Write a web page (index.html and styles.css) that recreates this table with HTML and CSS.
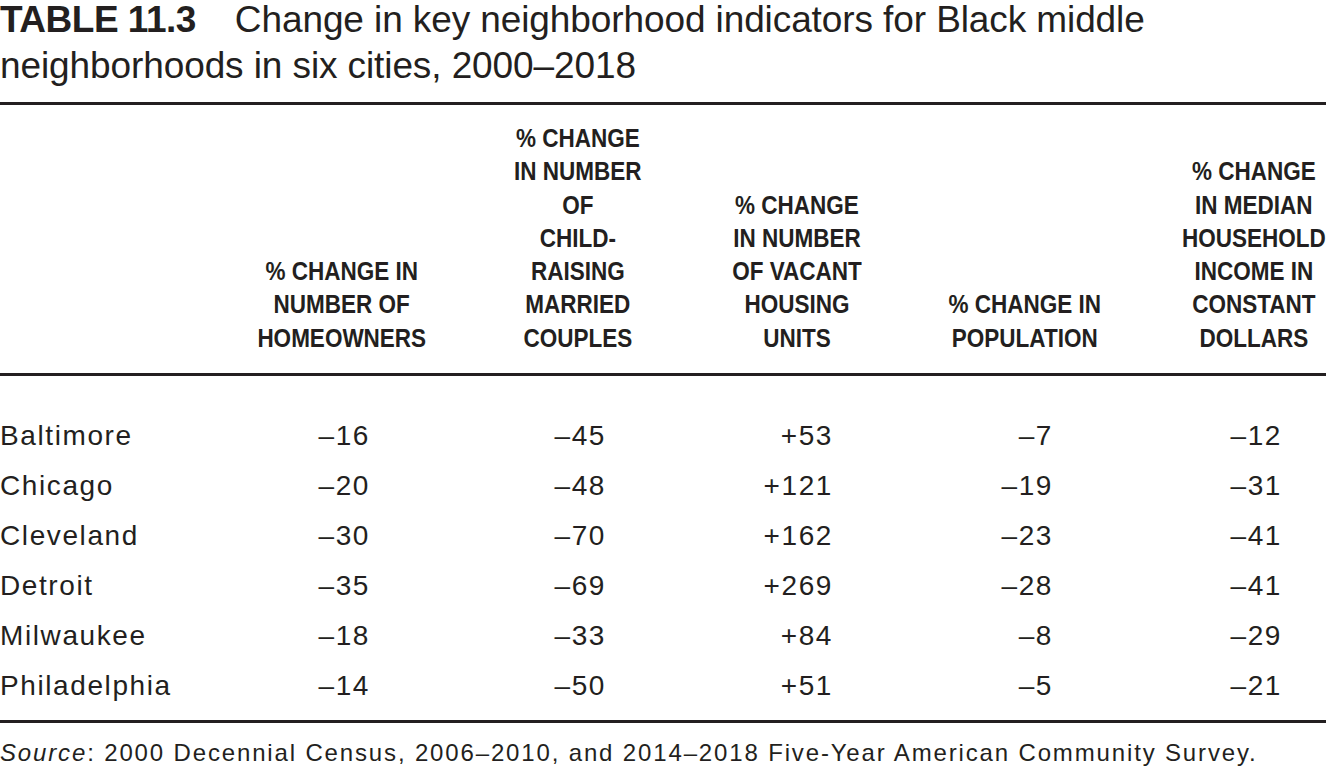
FILE: index.html
```html
<!DOCTYPE html>
<html lang="en">
<head>
<meta charset="utf-8">
<title>Table 11.3</title>
<link rel="stylesheet" href="styles.css">
</head>
<body>
<div class="page">
  <h1 class="title"><span class="label">TABLE 11.3</span>Change in key neighborhood indicators for Black middle neighborhoods in six cities, 2000–2018</h1>
  <table class="data">
    <colgroup>
      <col class="col-city">
      <col class="col-a">
      <col class="col-b">
      <col class="col-c">
      <col class="col-d">
      <col class="col-e">
    </colgroup>
    <thead>
      <tr>
        <th></th>
        <th><span class="h">% CHANGE IN<br>NUMBER OF<br>HOMEOWNERS</span></th>
        <th><span class="h">% CHANGE<br>IN NUMBER<br>OF<br>CHILD-<br>RAISING<br>MARRIED<br>COUPLES</span></th>
        <th><span class="h">% CHANGE<br>IN NUMBER<br>OF VACANT<br>HOUSING<br>UNITS</span></th>
        <th><span class="h">% CHANGE IN<br>POPULATION</span></th>
        <th><span class="h">% CHANGE<br>IN MEDIAN<br>HOUSEHOLD<br>INCOME IN<br>CONSTANT<br>DOLLARS</span></th>
      </tr>
    </thead>
    <tbody>
      <tr><td class="city">Baltimore</td><td class="num"><span>–16</span></td><td class="num"><span>–45</span></td><td class="num wide"><span>+53</span></td><td class="num"><span>–7</span></td><td class="num"><span>–12</span></td></tr>
      <tr><td class="city">Chicago</td><td class="num"><span>–20</span></td><td class="num"><span>–48</span></td><td class="num wide"><span>+121</span></td><td class="num"><span>–19</span></td><td class="num"><span>–31</span></td></tr>
      <tr><td class="city">Cleveland</td><td class="num"><span>–30</span></td><td class="num"><span>–70</span></td><td class="num wide"><span>+162</span></td><td class="num"><span>–23</span></td><td class="num"><span>–41</span></td></tr>
      <tr><td class="city">Detroit</td><td class="num"><span>–35</span></td><td class="num"><span>–69</span></td><td class="num wide"><span>+269</span></td><td class="num"><span>–28</span></td><td class="num"><span>–41</span></td></tr>
      <tr><td class="city">Milwaukee</td><td class="num"><span>–18</span></td><td class="num"><span>–33</span></td><td class="num wide"><span>+84</span></td><td class="num"><span>–8</span></td><td class="num"><span>–29</span></td></tr>
      <tr><td class="city">Philadelphia</td><td class="num"><span>–14</span></td><td class="num"><span>–50</span></td><td class="num wide"><span>+51</span></td><td class="num"><span>–5</span></td><td class="num"><span>–21</span></td></tr>
    </tbody>
  </table>
  <p class="source"><em>Source</em>: 2000 Decennial Census, 2006–2010, and 2014–2018 Five-Year American Community Survey.</p>
</div>
</body>
</html>
```
FILE: styles.css
```css
html, body {
  margin: 0;
  padding: 0;
  background: #ffffff;
}

body {
  color: #231f20;
  font-family: "Liberation Sans", Arial, sans-serif;
}

.page {
  width: 1326px;
}

.title {
  margin: -3px 0 13px 0;
  font-size: 37px;
  line-height: 46px;
  font-weight: normal;
  letter-spacing: -0.1px;
}

.title .label {
  font-weight: bold;
  letter-spacing: -0.5px;
  margin-right: 39px;
}

.data {
  width: 1326px;
  border-collapse: collapse;
  table-layout: fixed;
  border-top: 3px solid #231f20;
  border-bottom: 3px solid #231f20;
}

.col-city { width: 254px; }
.col-a { width: 176px; }
.col-b { width: 296px; }
.col-c { width: 142px; }
.col-d { width: 314px; }
.col-e { width: 144px; }

.data thead th {
  font-weight: bold;
  font-size: 25px;
  line-height: 33.3px;
  text-align: center;
  vertical-align: bottom;
  padding: 17px 0 18px 0;
  border-bottom: 3px solid #231f20;
  white-space: nowrap;
}

.data thead th .h {
  display: inline-block;
  margin: 0 -30px;
  transform: scaleX(0.9);
  transform-origin: center bottom;
}

.data tbody td {
  font-size: 28px;
  line-height: 50px;
  height: 50px;
  padding: 0;
  letter-spacing: 1.6px;
}

.data tbody tr:first-child td {
  padding-top: 35px;
}

.data tbody tr:last-child td {
  padding-bottom: 9px;
}

.data td.city {
  text-align: left;
}

.data td.num {
  text-align: center;
}

.data td.num span {
  display: inline-block;
  width: 56px;
  text-align: right;
}

.data td.num.wide span {
  width: 72px;
}

.source {
  margin: 15px 0 0 0;
  font-size: 24px;
  line-height: 30px;
  letter-spacing: 1.85px;
}
```
